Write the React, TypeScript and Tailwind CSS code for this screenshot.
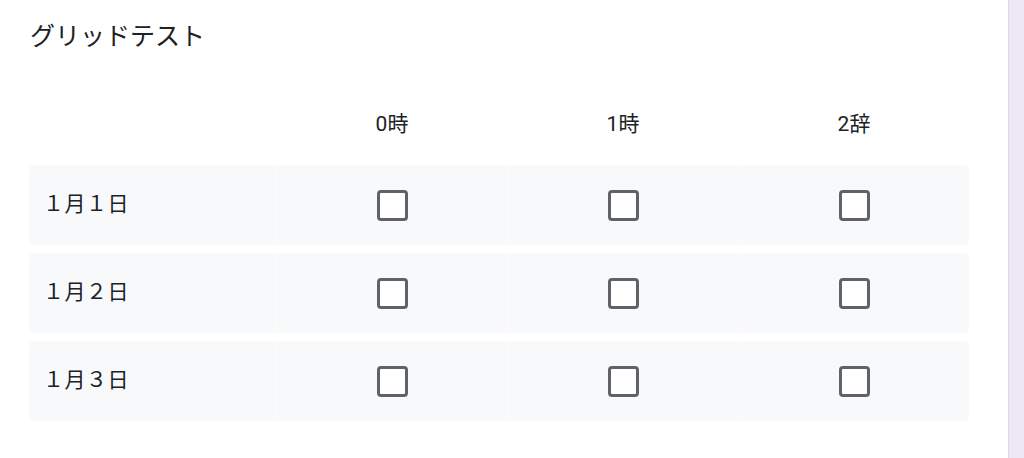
import React from 'react'

const cols = ['0時', '1時', '2辞']
const rows = ['１月１日', '１月２日', '１月３日']

function Box() {
  return <div className="w-[31px] h-[31px] rounded-[4px] border-[3px] border-[#5f6368] bg-white" />
}

export default function App() {
  return (
    <div
      className="w-[1024px] h-[458px] flex bg-white text-[#202124] overflow-hidden"
      style={{ fontFamily: 'Roboto, "Noto Sans CJK JP", sans-serif' }}
    >
      <div className="flex-1 pl-[29px] pt-[22px]">
        <h1 className="text-[25px] leading-[30px] pl-px">グリッドテスト</h1>

        {/* Header row */}
        <div className="mt-[33px] grid grid-cols-[247px_230px_230px_230px] gap-x-px w-[940px] h-[80px] items-center">
          <div />
          {cols.map(c => (
            <div key={c} className="text-center text-[21px]">{c}</div>
          ))}
        </div>

        <div className="flex flex-col gap-[8px] w-[940px]">
          {rows.map(r => (
            <div key={r} className="grid grid-cols-[247px_230px_230px_230px] gap-x-px bg-[#fcfcfd] h-[80px] rounded-[5px]">
              <div className="bg-[#f8f9fa] rounded-l-[5px] flex items-center pl-[14px] text-[21px] tracking-[0.5px]">{r}</div>
              {cols.map((c, i) => (
                <div
                  key={c}
                  className={`bg-[#f8f9fa] flex items-center justify-center ${i === cols.length - 1 ? 'rounded-r-[5px]' : ''}`}
                >
                  <Box />
                </div>
              ))}
            </div>
          ))}
        </div>
      </div>

      {/* Right side strip */}
      <div className="w-[16px] h-full border-l border-[#dadce0] bg-[#ede7f6]" />
    </div>
  )
}
